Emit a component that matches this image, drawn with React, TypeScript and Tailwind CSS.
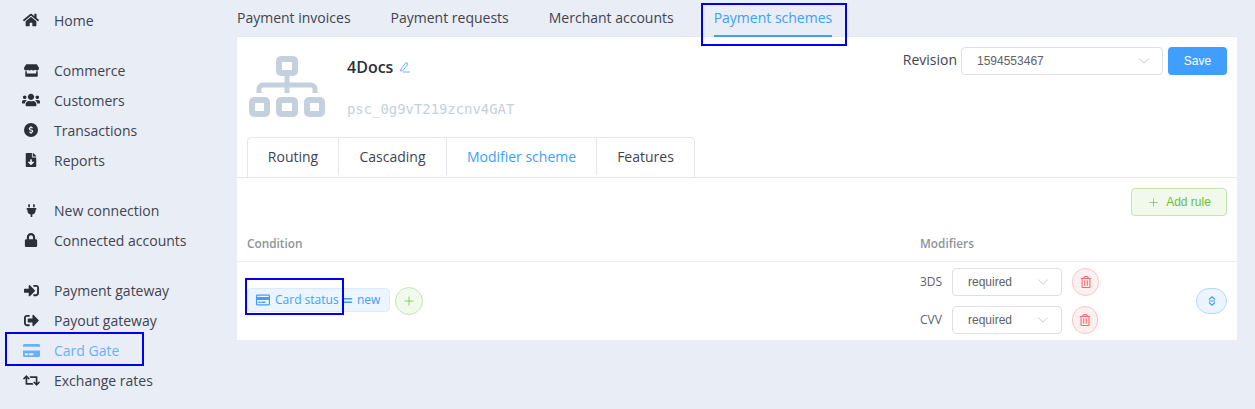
import React from "react";
import {
  FaHome, FaStore, FaUsers, FaDollarSign, FaFileDownload, FaPlug, FaLock, FaSignInAlt, FaSignOutAlt,
  FaCreditCard, FaRetweet, FaRegCreditCard, FaRegTrashAlt,
} from "react-icons/fa";
import { ChevronDown, Plus } from "lucide-react";

const Dollar = () => (
  <span className="flex h-[14px] w-[14px] items-center justify-center rounded-full bg-[#2d2f36]">
    <FaDollarSign className="text-[8px] text-[#e9edf5]" />
  </span>
);

const groups = [
  [{ i: <FaHome className="text-[16px]" />, t: "Home" }],
  [
    { i: <FaStore className="text-[15px]" />, t: "Commerce" },
    { i: <FaUsers className="text-[18px]" />, t: "Customers" },
    { i: <Dollar />, t: "Transactions" },
    { i: <FaFileDownload className="text-[14px]" />, t: "Reports" },
  ],
  [
    { i: <FaPlug className="text-[13px]" />, t: "New connection" },
    { i: <FaLock className="text-[14px]" />, t: "Connected accounts" },
  ],
  [
    { i: <FaSignInAlt className="text-[15px]" />, t: "Payment gateway" },
    { i: <FaSignOutAlt className="text-[15px]" />, t: "Payout gateway" },
    { i: <FaCreditCard className="text-[17px] text-[#66b1ff]" />, t: "Card Gate", active: true },
    { i: <FaRetweet className="text-[17px]" />, t: "Exchange rates" },
  ],
];

function Select({ value, className }: { value: string; className: string }) {
  return (
    <div className={`flex h-[28px] items-center justify-between rounded border border-[#dcdfe6] bg-white pl-[15px] pr-[9px] font-['Liberation_Sans',sans-serif] text-[12px] text-[#606266] ${className}`}>
      <span>{value}</span>
      <ChevronDown size={18} strokeWidth={1} className="text-[#b4b8c0]" />
    </div>
  );
}

function Trash({ className }: { className: string }) {
  return (
    <button className={`flex items-center justify-center rounded-full border border-[#fbc4c4] bg-[#fef0f0] text-[#f56c6c] ${className}`}>
      <FaRegTrashAlt className="text-[12px]" />
    </button>
  );
}

function Mark({ className }: { className: string }) {
  return <div className={`pointer-events-none absolute border-2 border-[#0000f0] ${className}`} />;
}

function Scheme() {
  return (
    <svg width="76" height="61" viewBox="0 0 76 61" className="ml-[12px] mt-[9px] text-[#c5d0de]" fill="none">
      <g stroke="currentColor" strokeWidth="6">
        <rect x="30" y="3" width="16" height="14" rx="2" />
        <rect x="3" y="44" width="15" height="14" rx="2" />
        <rect x="30" y="44" width="16" height="14" rx="2" />
        <rect x="58" y="44" width="15" height="14" rx="2" />
      </g>
      <path d="M38 18V37M10 37V33a4 4 0 0 1 4-4H62a4 4 0 0 1 4 4V37" stroke="currentColor" strokeWidth="5" />
    </svg>
  );
}

export default function App() {
  return (
    <div className="relative flex h-[409px] w-full overflow-hidden bg-[#e9edf5] font-['Open_Sans','Noto_Sans',sans-serif] text-[14px] text-[#3f4450]">
      <aside className="flex w-[237px] shrink-0 flex-col gap-[20px] pt-[5px]">
        {groups.map((g, n) => (
          <div key={n}>
            {g.map((r) => (
              <div key={r.t} className={`flex h-[30px] items-center ${r.active ? "text-[#66b1ff]" : ""}`}>
                <span className={`flex w-[54px] justify-center pl-[10px] pr-[2px] ${r.active ? "" : "text-[#2d2f36]"}`}>{r.i}</span>
                <span>{r.t}</span>
              </div>
            ))}
          </div>
        ))}
      </aside>

      <main className="w-[1000px] shrink-0">
        <nav className="flex h-[37px] gap-[40px] border-b border-[#e4e7ed]">
          <span className="pt-[7px]">Payment invoices</span>
          <span className="pt-[7px]">Payment requests</span>
          <span className="pt-[7px]">Merchant accounts</span>
          <span className="h-[37px] border-b-2 border-[#409eff] pt-[7px] text-[#409eff]">Payment schemes</span>
        </nav>

        <section className="h-[303px] bg-white">
          <div className="flex h-[100px] justify-between pr-[10px] pt-[10px]">
            <div className="flex">
              <Scheme />
              <div className="ml-[22px]">
                <div className="flex items-center gap-[6px] pt-[9px] text-[16px] font-semibold leading-[22px] text-[#2b2f36]">
                  4Docs
                  <svg width="12" height="12" viewBox="0 0 12 12" fill="none" stroke="#66b1ff" strokeWidth="1">
                    <path d="M2 8 7 1.5l2 1.5L4 9.5 1.6 10z" />
                    <path d="M4 11h7" />
                  </svg>
                </div>
                <div className="pt-[21px] font-['DejaVu_Sans_Mono',monospace] text-[13.9px] leading-[20px] text-[#c5d0de]">psc_0g9vT219zcnv4GAT</div>
              </div>
            </div>
            <div className="flex items-start">
              <span className="mr-[4px] pt-[2px] text-[14px]">Revision</span>
              <Select value="1594553467" className="w-[202px]" />
              <button className="ml-[5px] h-[28px] w-[59px] rounded bg-[#409eff] font-['Liberation_Sans',sans-serif] text-[12px] text-white">Save</button>
            </div>
          </div>

          <div className="flex h-[41px] border-b border-[#e4e7ed] pl-[10px]">
            <div className="flex h-[41px] rounded-t border border-[#e4e7ed] pb-[2px]">
              <div className="flex w-[90px] items-center justify-center">Routing</div>
              <div className="flex w-[108px] items-center justify-center border-l border-[#e4e7ed]">Cascading</div>
              <div className="flex w-[150px] items-center justify-center border-l border-[#e4e7ed] bg-white text-[#409eff]">Modifier scheme</div>
              <div className="flex w-[98px] items-center justify-center border-l border-[#e4e7ed]">Features</div>
            </div>
          </div>

          <div className="flex justify-end pr-[10px] pt-[10px]">
            <button className="flex h-[28px] w-[96px] items-center justify-center gap-[6px] rounded border border-[#c2e7b0] bg-[#f0f9eb] font-['Liberation_Sans',sans-serif] text-[12px] text-[#67c23a]">
              <Plus size={13} strokeWidth={1.25} />
              Add rule
            </button>
          </div>

          <div className="flex h-[46px] items-center border-b border-[#e9edf5] pl-[10px] pt-[10px] text-[11.8px] font-semibold text-[#909399]">
            <span className="w-[673px]">Condition</span>
            <span>Modifiers</span>
          </div>

          <div className="flex h-[78px] items-center pl-[10px] pr-[10px]">
            <div className="flex w-[673px] items-center">
              <div className="mb-[3px] flex h-[24px] w-[143px] items-center rounded border border-[#d9ecff] bg-[#ecf5ff] pl-[8px] text-[12px] text-[#409eff]">
                <FaRegCreditCard className="mr-[5px] text-[14px]" />
                Card status
                <span className="mx-[4px] text-[18px] font-semibold leading-none">=</span>
                new
              </div>
              <button className="ml-[5px] flex h-[28px] w-[28px] items-center justify-center rounded-full border border-[#c2e7b0] bg-[#f0f9eb] text-[#67c23a]">
                <Plus size={14} strokeWidth={1.25} />
              </button>
            </div>
            <div className="flex w-[180px] flex-col gap-[10px]">
              <div className="flex items-center text-[12px] text-[#606266]">
                <span className="w-[32px]">3DS</span>
                <Select value="required" className="w-[110px]" />
                <Trash className="ml-[10px] h-[28px] w-[27px]" />
              </div>
              <div className="flex items-center text-[12px] text-[#606266]">
                <span className="w-[32px]">CVV</span>
                <Select value="required" className="w-[110px]" />
                <Trash className="ml-[10px] h-[28px] w-[26px]" />
              </div>
            </div>
            <button className="ml-auto flex h-[26px] w-[31px] items-center justify-center rounded-full border border-[#b3d8ff] bg-[#ecf5ff] text-[#409eff]">
              <svg width="8" height="10" viewBox="0 0 8 10" fill="none" stroke="currentColor" strokeWidth="1.2">
                <path d="M1 3.5 4 .8l3 2.7M1 5h6M1 6.5l3 2.7 3-2.7" />
              </svg>
            </button>
          </div>
        </section>
      </main>

      <Mark className="left-[5px] top-[332px] h-[34px] w-[139px]" />
      <Mark className="left-[701px] top-[3px] h-[43px] w-[146px]" />
      <Mark className="left-[245px] top-[278px] h-[37px] w-[99px]" />
    </div>
  );
}
